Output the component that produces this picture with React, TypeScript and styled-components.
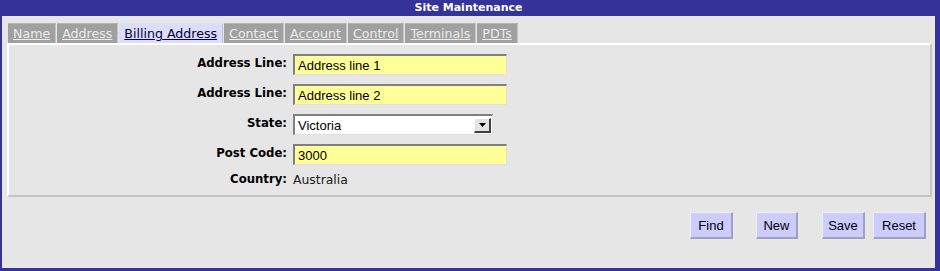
import React from 'react';
import styled, { createGlobalStyle } from 'styled-components';

const GlobalStyle = createGlobalStyle`
  html, body {
    margin: 0;
    padding: 0;
    background: #e6e6e6;
  }
`;

const Window = styled.div`
  width: 940px;
  height: 271px;
  box-sizing: border-box;
  border-style: solid;
  border-color: #333399;
  border-width: 0 5px 3px 2px;
  background: #e6e6e6;
  display: flex;
  flex-direction: column;
  font-family: 'DejaVu Sans', Verdana, sans-serif;
`;

const TitleBar = styled.div`
  height: 16px;
  background: #333399;
  color: #ffffff;
  font-size: 11px;
  font-weight: bold;
  line-height: 16px;
  text-align: center;
`;

const Body = styled.div`
  padding: 7px 3px 0 5px;
  display: flex;
  flex-direction: column;
`;

const TabRow = styled.div`
  display: flex;
  padding-left: 1px;
`;

const Tab = styled.a<{ $active?: boolean }>`
  height: 20px;
  line-height: 20px;
  padding: 0 5px;
  margin-right: 1px;
  font-size: 12.6px;
  text-decoration: underline;
  cursor: pointer;
  background: ${(p) => (p.$active ? '#dcdcff' : '#a0a0a0')};
  color: ${(p) => (p.$active ? '#000033' : '#ececec')};
  border-top: 1px solid ${(p) => (p.$active ? '#dcdcff' : '#b4b4b4')};
  border-right: 1px solid #c4c4c4;
  box-sizing: border-box;
`;

const Panel = styled.div`
  border-style: solid;
  border-width: 2px;
  border-color: #ffffff #c4c4c4 #c4c4c4 #ffffff;
  padding: 9px 0 8px 0;
  display: grid;
  grid-template-columns: 278px auto;
  column-gap: 6px;
  row-gap: 9px;
  align-items: start;
`;

const Label = styled.div<{ $top?: number }>`
  font-size: 11.7px;
  font-weight: bold;
  color: #000000;
  text-align: right;
  padding-top: ${(p) => p.$top ?? 2}px;
  margin-top: ${(p) => (p.$top !== undefined ? -2 : 0)}px;
`;

const TextInput = styled.input`
  width: 214px;
  height: 21px;
  box-sizing: border-box;
  margin: 0;
  padding: 1px 3px 0;
  background: #ffff99;
  border-style: solid;
  border-width: 2px 1px 1px 2px;
  border-color: #808080 #e0e0e0 #e0e0e0 #808080;
  font-family: 'Liberation Sans', Arial, sans-serif;
  font-size: 13px;
  color: #000000;
  outline: none;
`;

const SelectBox = styled.div`
  width: 200px;
  height: 21px;
  box-sizing: border-box;
  background: #ffffff;
  border-style: solid;
  border-width: 2px 1px 1px 2px;
  border-color: #808080 #e0e0e0 #e0e0e0 #808080;
  display: flex;
  align-items: center;
  justify-content: space-between;
  padding: 0 1px 0 3px;
  font-family: 'Liberation Sans', Arial, sans-serif;
  font-size: 13px;
`;

const DropButton = styled.div`
  width: 17px;
  height: 15px;
  box-sizing: border-box;
  background: #e4e4e4;
  border-style: solid;
  border-width: 1px 2px 2px 1px;
  border-color: #ffffff #404040 #404040 #ffffff;
  display: flex;
  align-items: center;
  justify-content: center;
`;

const Value = styled.div`
  font-size: 12.4px;
  color: #202020;
  margin-top: -2px;
`;

const ButtonBar = styled.div`
  display: flex;
  justify-content: flex-end;
  padding: 15px 6px 0 0;
`;

const Button = styled.button<{ $gap: number; $w: number }>`
  width: ${(p) => p.$w}px;
  height: 27px;
  margin-left: ${(p) => p.$gap}px;
  background: #ccccff;
  border-style: solid;
  border-width: 1px 2px 2px 1px;
  border-color: #eeeeff #a0a0c0 #a0a0c0 #eeeeff;
  font-family: 'Liberation Sans', Arial, sans-serif;
  font-size: 13px;
  color: #000000;
  padding: 0;
`;

const tabs = ['Name', 'Address', 'Billing Address', 'Contact', 'Account', 'Control', 'Terminals', 'PDTs'];

export default function App() {
  return (
    <>
      <GlobalStyle />
      <Window>
        <TitleBar>Site Maintenance</TitleBar>
        <Body>
          <TabRow>
            {tabs.map((t) => (
              <Tab key={t} $active={t === 'Billing Address'}>
                {t}
              </Tab>
            ))}
          </TabRow>
          <Panel>
            <Label>Address Line:</Label>
            <TextInput defaultValue="Address line 1" />
            <Label>Address Line:</Label>
            <TextInput defaultValue="Address line 2" />
            <Label>State:</Label>
            <SelectBox>
              <span>Victoria</span>
              <DropButton>
                <svg width="7" height="4" viewBox="0 0 7 4">
                  <path d="M0 0h7L3.5 4z" fill="#000" />
                </svg>
              </DropButton>
            </SelectBox>
            <Label>Post Code:</Label>
            <TextInput defaultValue="3000" />
            <Label $top={0}>Country:</Label>
            <Value>Australia</Value>
          </Panel>
          <ButtonBar>
            <Button $gap={0} $w={43}>Find</Button>
            <Button $gap={23} $w={42}>New</Button>
            <Button $gap={24} $w={43}>Save</Button>
            <Button $gap={8} $w={53}>Reset</Button>
          </ButtonBar>
        </Body>
      </Window>
    </>
  );
}
